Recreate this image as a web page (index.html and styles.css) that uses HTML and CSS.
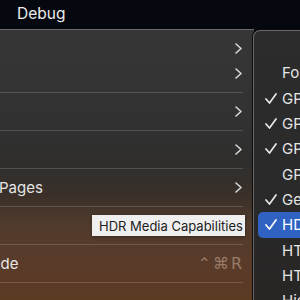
FILE: index.html
```html
<!DOCTYPE html>
<html lang="en">
<head>
<meta charset="utf-8">
<title>Debug menu</title>
<link rel="stylesheet" href="styles.css">
</head>
<body>
<div class="screen">
  <header class="menubar">
    <span class="menubar-item">Debug</span>
  </header>
  <div class="desk">
    <div class="menu main-menu">
      <div class="item"><span class="label"></span><svg class="chev" width="7" height="11" viewBox="0 0 7 11"><polyline points="1,1 6,5.5 1,10"/></svg></div>
      <div class="item"><span class="label"></span><svg class="chev" width="7" height="11" viewBox="0 0 7 11"><polyline points="1,1 6,5.5 1,10"/></svg></div>
      <div class="sep"></div>
      <div class="item"><span class="label"></span><svg class="chev" width="7" height="11" viewBox="0 0 7 11"><polyline points="1,1 6,5.5 1,10"/></svg></div>
      <div class="sep"></div>
      <div class="item"><span class="label"></span><svg class="chev" width="7" height="11" viewBox="0 0 7 11"><polyline points="1,1 6,5.5 1,10"/></svg></div>
      <div class="sep"></div>
      <div class="item"><span class="label">Pages</span><svg class="chev" width="7" height="11" viewBox="0 0 7 11"><polyline points="1,1 6,5.5 1,10"/></svg></div>
      <div class="sep"></div>
      <div class="item"><span class="label"></span></div>
      <div class="sep"></div>
      <div class="item"><span class="label label-cut">Mode</span><span class="shortcut">⌃⌘R</span></div>
      <div class="sep"></div>
    </div>

    <div class="menu sub-menu">
      <div class="sub-item"><span class="check"></span><span class="sub-label">Form Controls Refresh</span></div>
      <div class="sub-item"><span class="check"><svg width="12" height="11" viewBox="0 0 12 11"><polyline points="1,6 4.5,10 11,1"/></svg></span><span class="sub-label">GPU Process: Canvas Rendering</span></div>
      <div class="sub-item"><span class="check"><svg width="12" height="11" viewBox="0 0 12 11"><polyline points="1,6 4.5,10 11,1"/></svg></span><span class="sub-label">GPU Process: DOM Rendering</span></div>
      <div class="sub-item"><span class="check"><svg width="12" height="11" viewBox="0 0 12 11"><polyline points="1,6 4.5,10 11,1"/></svg></span><span class="sub-label">GPU Process: Media</span></div>
      <div class="sub-item"><span class="check"></span><span class="sub-label">GPU Process: WebGL</span></div>
      <div class="sub-item"><span class="check"><svg width="12" height="11" viewBox="0 0 12 11"><polyline points="1,6 4.5,10 11,1"/></svg></span><span class="sub-label">Generic Cue API</span></div>
      <div class="sub-item selected"><span class="check"><svg width="12" height="11" viewBox="0 0 12 11"><polyline points="1,6 4.5,10 11,1"/></svg></span><span class="sub-label">HDR Media Capabilities</span></div>
      <div class="sub-item"><span class="check"></span><span class="sub-label">HTTP/3</span></div>
      <div class="sub-item"><span class="check"></span><span class="sub-label">HTTPS Upgrade</span></div>
      <div class="sub-item"><span class="check"></span><span class="sub-label">Hidden Until Found</span></div>
    </div>

    <div class="tooltip">HDR Media Capabilities</div>
  </div>
</div>
</body>
</html>
```

FILE: styles.css
```css
html, body {
  margin: 0;
  padding: 0;
  background: #05080e;
}

.screen {
  width: 300px;
  height: 300px;
  overflow: hidden;
  font-family: Inter, "Liberation Sans", "DejaVu Sans", sans-serif;
  display: flex;
  flex-direction: column;
}

.menubar {
  height: 29px;
  flex: none;
  background: #05080e;
  display: flex;
  align-items: center;
  padding-left: 17px;
}

.menubar-item {
  color: #ececec;
  font-size: 15.5px;
  line-height: 1;
  margin-top: -2px;
}

.desk {
  position: relative;
  flex: 1;
}

.main-menu {
  width: 254px;
  height: 100%;
  box-sizing: border-box;
  border-top: 1px solid #6a6a6a;
  padding-top: 5.5px;
  background: linear-gradient(180deg,
    #363636 0px,
    #333333 70px,
    #2f2e2d 135px,
    #3a3029 165px,
    #513b2c 195px,
    #5a3b2a 235px,
    #5c3b22 271px);
  overflow: hidden;
}

.item {
  height: 25px;
  display: flex;
  align-items: center;
  padding-right: 12px;
  color: #e6e6e6;
  font-size: 15px;
}

.label {
  flex: 1;
  white-space: nowrap;
  margin-left: -1px;
}

.label-cut {
  margin-left: -22px;
}

.chev {
  fill: none;
  stroke: #d8d8d8;
  stroke-width: 1.6;
  stroke-linecap: round;
  stroke-linejoin: round;
}

.shortcut {
  font-family: "DejaVu Sans", Inter, sans-serif;
  font-size: 16px;
  color: rgba(215, 190, 165, 0.5);
  letter-spacing: 2px;
  margin-right: -2px;
}

.sep {
  height: 13px;
  display: flex;
  align-items: center;
  padding-right: 11px;
}

.sep::after {
  content: "";
  display: block;
  flex: 1;
  height: 1px;
  background: rgba(255, 255, 255, 0.16);
}

.sub-menu {
  position: absolute;
  left: 253px;
  top: 1px;
  width: 120px;
  height: 300px;
  box-sizing: border-box;
  border: 1px solid rgba(255, 255, 255, 0.3);
  border-radius: 7px;
  box-shadow: 0 0 0 1px #0b0b0b;
  background: linear-gradient(180deg, #2c2c2c 0px, #2a2a2a 150px, #282625 270px);
  padding: 29.3px 0 0 4px;
}

.sub-item {
  height: 25.33px;
  display: flex;
  align-items: center;
  color: #e6e6e6;
  font-size: 15px;
  white-space: nowrap;
  border-radius: 5px;
  padding-left: 7px;
}

.sub-item.selected {
  background: #2f62c3;
  color: #ffffff;
}

.check {
  width: 17px;
  flex: none;
  display: flex;
  align-items: center;
}

.check svg {
  fill: none;
  stroke: #e8e8e8;
  stroke-width: 1.7;
  stroke-linecap: round;
  stroke-linejoin: round;
}

.selected .check svg {
  stroke: #ffffff;
}

.tooltip {
  position: absolute;
  left: 92px;
  top: 186px;
  width: 153px;
  height: 21px;
  box-sizing: border-box;
  padding-left: 7px;
  display: flex;
  align-items: center;
  background: #efefef;
  color: #1c1c1c;
  font-size: 13px;
  white-space: nowrap;
  box-shadow: 0 1px 3px rgba(0, 0, 0, 0.35);
}
```
